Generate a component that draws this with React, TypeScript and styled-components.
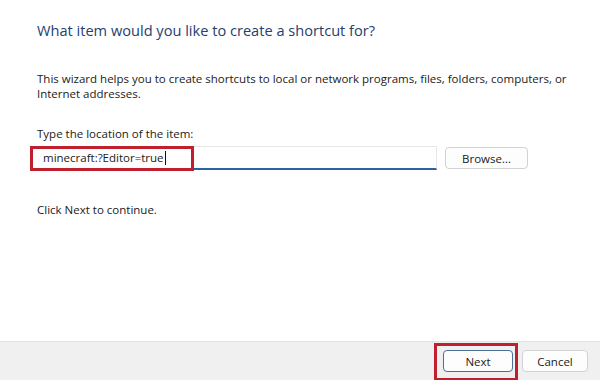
import React from 'react';
import styled, { createGlobalStyle } from 'styled-components';

const GlobalStyle = createGlobalStyle`
  html, body {
    margin: 0;
    padding: 0;
    background: #ffffff;
  }
  body {
    font-family: "Open Sans", "Noto Sans", "Liberation Sans", sans-serif;
    color: #1a1a1a;
  }
`;

const Dialog = styled.div`
  width: 600px;
  height: 380px;
  display: flex;
  flex-direction: column;
  overflow: hidden;
`;

const Content = styled.main`
  flex: 1;
  padding: 19px 20px 0 37px;
  display: flex;
  flex-direction: column;
`;

const Title = styled.h1`
  margin: 0;
  font-size: 14.6px;
  font-weight: 400;
  color: #24406f;
  line-height: 22px;
  white-space: nowrap;
`;

const Text = styled.p<{ $top: number }>`
  margin: ${(p) => p.$top}px 0 0;
  font-size: 11.5px;
  line-height: 15px;
  color: #1a1a1a;
  white-space: nowrap;
`;

const FieldRow = styled.div`
  display: flex;
  align-items: center;
  gap: 8px;
  margin: 5px 0 0 -6px;
`;

const InputWrap = styled.div`
  position: relative;
  width: 406px;
  height: 24px;
  box-sizing: border-box;
  border: 1px solid #e6e6e6;
  border-bottom: 2px solid #2c62a6;
  display: flex;
  align-items: center;
  padding-left: 11px;
  font-size: 11.5px;
`;

const Caret = styled.span`
  display: inline-block;
  width: 1px;
  height: 14px;
  background: #111;
  margin-left: 1px;
`;

const Highlight = styled.div<{ $w: number; $h: number; $l: number; $t: number }>`
  position: absolute;
  left: ${(p) => p.$l}px;
  top: ${(p) => p.$t}px;
  width: ${(p) => p.$w}px;
  height: ${(p) => p.$h}px;
  box-sizing: border-box;
  border: 3px solid #c0202e;
  pointer-events: none;
`;

const Button = styled.button<{ $primary?: boolean }>`
  position: relative;
  height: 22px;
  box-sizing: border-box;
  padding: 0;
  background: #fdfdfd;
  border: 1px solid ${(p) => (p.$primary ? '#4b6f96' : '#d2d2d2')};
  border-radius: 4px;
  font-family: inherit;
  font-size: 11.5px;
  color: #1a1a1a;
  display: flex;
  align-items: center;
  justify-content: center;
`;

const Footer = styled.footer`
  height: 39px;
  background: #f0f0f0;
  border-top: 1px solid #e2e2e2;
  display: flex;
  justify-content: flex-end;
  align-items: center;
  gap: 9px;
  padding: 0 12px 0 0;
  box-sizing: border-box;
`;

export default function App() {
  return (
    <>
      <GlobalStyle />
      <Dialog>
        <Content>
          <Title>What item would you like to create a shortcut for?</Title>
          <Text $top={30}>
            This wizard helps you to create shortcuts to local or network programs, files, folders, computers, or
            <br />
            Internet addresses.
          </Text>
          <Text $top={25}>Type the location of the item:</Text>
          <FieldRow>
            <InputWrap>
              minecraft:?Editor=true
              <Caret />
              <Highlight $l={-2} $t={-1} $w={164} $h={25} />
            </InputWrap>
            <Button style={{ width: 83 }}>Browse...</Button>
          </FieldRow>
          <Text $top={32}>Click Next to continue.</Text>
        </Content>
        <Footer>
          <Button $primary style={{ width: 70 }}>
            Next
            <Highlight $l={-10} $t={-8} $w={84} $h={38} />
          </Button>
          <Button style={{ width: 66 }}>Cancel</Button>
        </Footer>
      </Dialog>
    </>
  );
}
